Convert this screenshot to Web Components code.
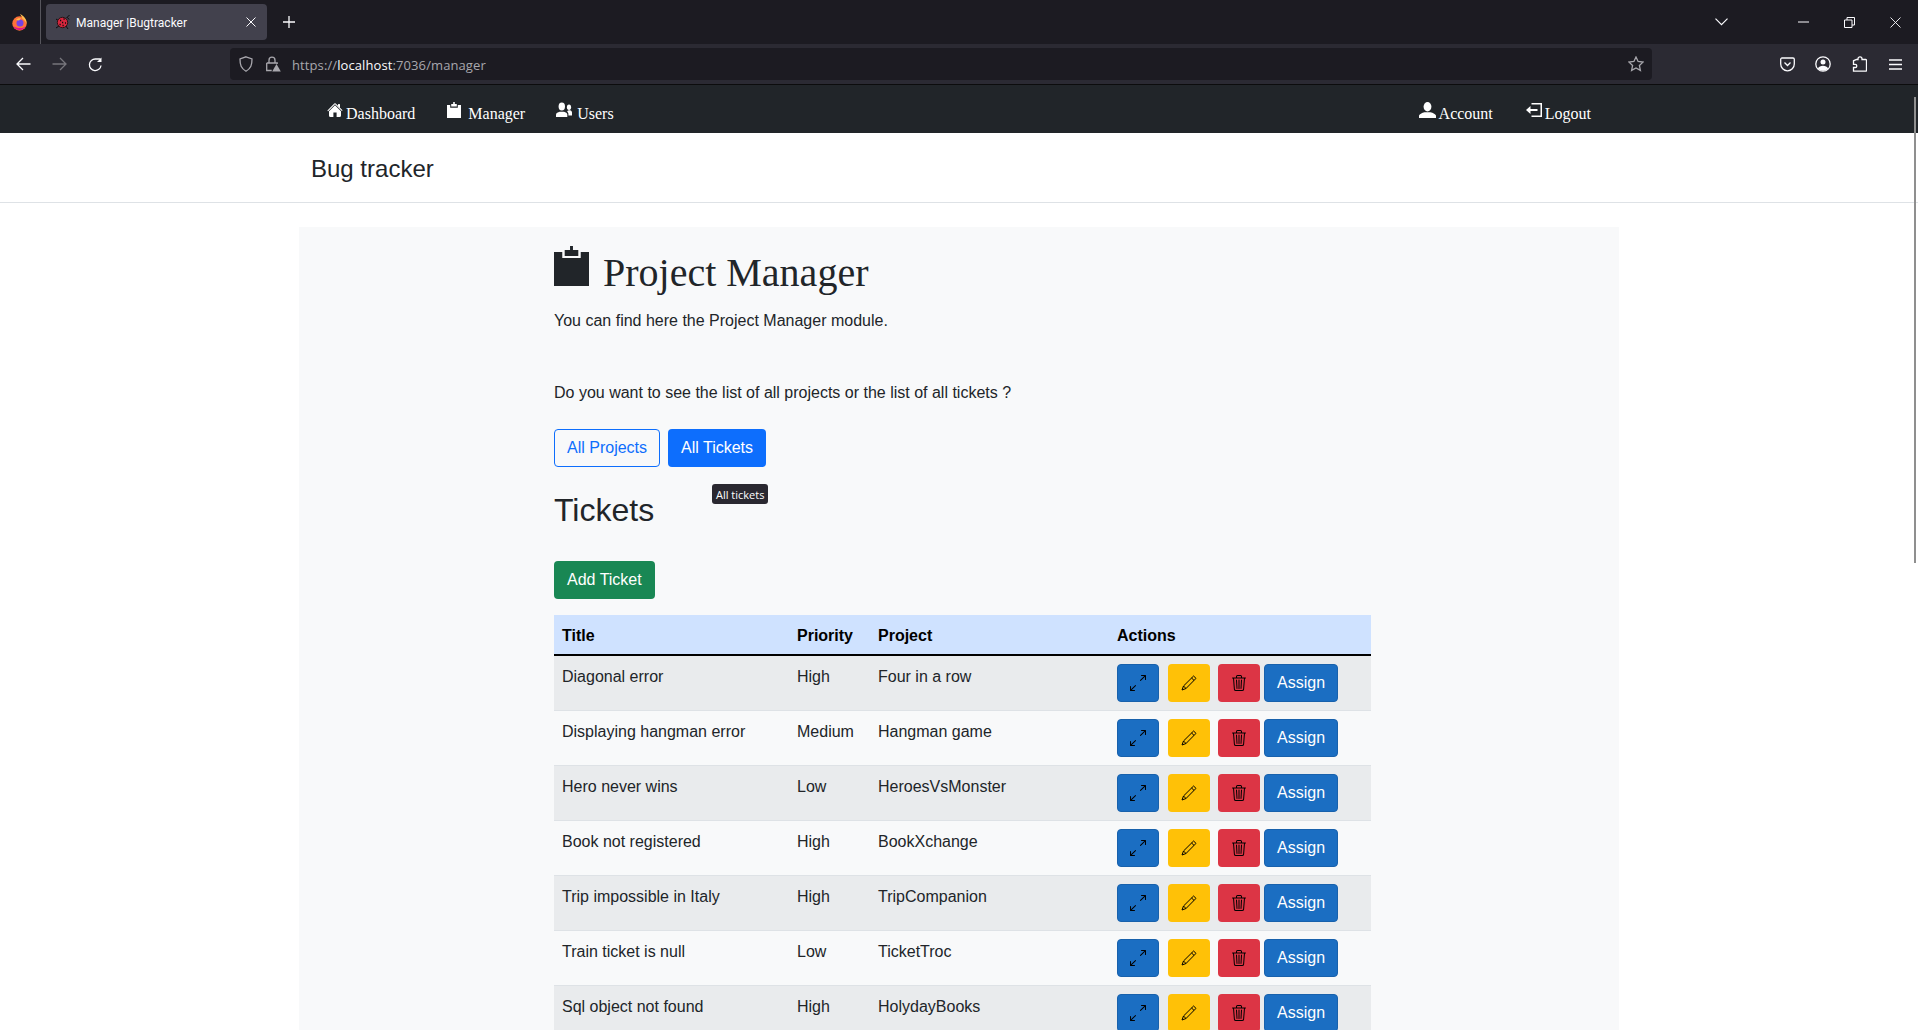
<!DOCTYPE html>
<html lang="en">
<head>
<meta charset="utf-8">
<title>Manager |Bugtracker</title>
<style>
  html, body { margin: 0; height: 1030px; overflow: hidden; background: #fff; }
  body { font-family: "Liberation Sans", Arial, sans-serif; color: #212529; }
</style>
</head>
<body>
<browser-chrome></browser-chrome>
<app-nav>
  <nav-link icon="house" slot="left">Dashboard</nav-link>
  <nav-link icon="clipboard" slot="left" gap="6">Manager</nav-link>
  <nav-link icon="people" slot="left" gap="5">Users</nav-link>
  <nav-link icon="person" slot="right" w="17">Account</nav-link>
  <nav-link icon="logout" slot="right">Logout</nav-link>
</app-nav>
<app-header>Bug tracker</app-header>
<page-card>
  <manager-intro></manager-intro>
  <ticket-table>
    <ticket-row name="Diagonal error" priority="High" project="Four in a row"></ticket-row>
    <ticket-row name="Displaying hangman error" priority="Medium" project="Hangman game"></ticket-row>
    <ticket-row name="Hero never wins" priority="Low" project="HeroesVsMonster"></ticket-row>
    <ticket-row name="Book not registered" priority="High" project="BookXchange"></ticket-row>
    <ticket-row name="Trip impossible in Italy" priority="High" project="TripCompanion"></ticket-row>
    <ticket-row name="Train ticket is null" priority="Low" project="TicketTroc"></ticket-row>
    <ticket-row name="Sql object not found" priority="High" project="HolydayBooks"></ticket-row>
  </ticket-table>
</page-card>
<page-scrollbar></page-scrollbar>

<script>
// icon drawings, all on a 16 unit grid
const ICONS = {
  house: '<path d="m8 3.3 6 6v4.2a1.5 1.5 0 0 1-1.5 1.5H9.6v-4.5H6.4V15H3.5A1.5 1.5 0 0 1 2 13.5V9.3l6-6zm5-.8V6l-2-2V2.5a.5.5 0 0 1 .5-.5h1a.5.5 0 0 1 .5.5z"/><path d="M7.3 1.5a1 1 0 0 1 1.4 0l6.6 6.6a.5.5 0 0 1-.7.7L8 2.2 1.4 8.9a.5.5 0 1 1-.7-.7L7.3 1.5z"/>',
  clipboard: '<path d="M1 3h3.2v2.8h7.6V3H15v13H1z"/><path d="M5.2 2h2V0h1.6v2h2v2.6H5.2z"/>',
  people: '<ellipse cx="5.8" cy="4.6" rx="3.2" ry="4"/><path d="M0 15v-2.4c0-1.6 2-2.4 3.6-2.9h4.4c1.600.5 3.300 1.300 3.300 2.900V15z"/><ellipse cx="13" cy="5.300" rx="2.100" ry="2.700"/><path d="M12.400 13.500v-1.300c0-1.200-.5-2-1.300-2.700.5-.8 1.200-1.200 1.900-1.200h1c1 .3 2 1 2 2.200v3z"/>',
  person: '<ellipse cx="8" cy="4.700" rx="3.700" ry="4.700"/><path d="M0 16v-2c0-1.900 3-3 5.200-3.700h5.600C13 11 16 12.100 16 14v2z"/>',
  logout: '<path d="M5.500 1H16v14H5.500v-1.500h9v-11h-9z"/><path d="M11.500 7h-7V4L0 8l4.500 4V9h7z"/>',
  expand: '<path d="M5.828 10.172a.5.5 0 0 0-.707 0l-4.096 4.096V11.500a.5.5 0 0 0-1 0v3.975a.5.5 0 0 0 .5.5H4.500a.5.5 0 0 0 0-1H1.732l4.096-4.096a.5.5 0 0 0 0-.707zm4.344-4.344a.5.5 0 0 0 .707 0l4.096-4.096V4.500a.5.5 0 1 0 1 0V.525a.5.5 0 0 0-.5-.5H11.500a.5.5 0 0 0 0 1h2.768l-4.096 4.096a.5.5 0 0 0 0 .707z"/>',
  pencil: '<path d="M12.600 1 15 3.400 5 13.500 1 15l1.500-4zM10.600 3l2.400 2.400M2.500 11 5 13.500" fill="none" stroke="currentColor" stroke-width="1"/>',
  trash: '<path d="M6.500 1h3a.5.5 0 0 1 .5.5v1H6v-1a.5.5 0 0 1 .5-.5ZM11 2.500v-1A1.500 1.500 0 0 0 9.500 0h-3A1.500 1.500 0 0 0 5 1.500v1H1.500a.5.5 0 0 0 0 1h.538l.853 10.660A2 2 0 0 0 4.885 16h6.230a2 2 0 0 0 1.994-1.840l.853-10.660h.538a.5.5 0 0 0 0-1H11Zm1.958 1-.846 10.580a1 1 0 0 1-.997.920h-6.230a1 1 0 0 1-.997-.920L3.042 3.500h9.916Zm-7.487 1a.5.5 0 0 1 .528.470l.5 8.500a.5.5 0 0 1-.998.060L5 5.030a.5.5 0 0 1 .47-.53Zm5.058 0a.5.5 0 0 1 .47.530l-.5 8.500a.5.5 0 1 1-.998-.060l.5-8.500a.5.5 0 0 1 .528-.47ZM8 4.500a.5.5 0 0 1 .5.5v8.500a.5.5 0 0 1-1 0V5a.5.5 0 0 1 .5-.5Z"/>'
}

/**
 * Small base class, renders the given html into an open shadow root.
 */
class ShadowElement extends HTMLElement {
  constructor () {
    super()
    this.attachShadow({ mode: 'open' })
  }

  render (html) {
    this.shadowRoot.innerHTML = html
  }
}

customElements.define('ui-icon', class extends ShadowElement {
  connectedCallback () {
    const w = this.getAttribute('w') || 16
    const h = this.getAttribute('h') || 16
    this.render(`
      <style>
        :host { display: inline-flex; flex: none; width: ${w}px; height: ${h}px; }
        svg { display: block; width: 100%; height: 100%; fill: currentColor; }
      </style>
      <svg viewBox="0 0 16 16" preserveAspectRatio="none">${ICONS[this.getAttribute('name')]}</svg>`)
  }
})

customElements.define('browser-chrome', class extends ShadowElement {
  connectedCallback () {
    this.render(`
      <style>
        :host { display: block; font-family: "Open Sans", "Noto Sans", sans-serif; color: #fbfbfe; }
        svg { display: block; fill: none; stroke: currentColor; stroke-width: 1.3; }
        .tabs { height: 44px; background: #1c1b22; display: flex; align-items: center; position: relative; }
        .ff { width: 41px; height: 44px; display: flex; align-items: center; box-sizing: border-box; padding-left: 11px; border-right: 1px solid #56555c; }
        .tab { margin-left: 5px; width: 221px; height: 36px; border-radius: 4px; background: #42414d; display: flex; align-items: center; box-sizing: border-box; padding-left: 9px; font: 12px Roboto, "Open Sans", sans-serif; }
        .tab span { margin-left: 5px; padding-top: 1px; }
        .tab svg.x { margin-left: auto; margin-right: 11px; }
        .plus { margin-left: 16px; }
        .right { margin-left: auto; display: flex; align-items: center; }
        .win { width: 46px; display: flex; justify-content: center; }
        .chev { margin-right: 52px; }
        .bar { height: 40px; background: #2b2a33; border-bottom: 1px solid #0c0c0d; display: grid; grid-template-columns: 230px 1422px 1fr; align-items: center; }
        .nav { display: flex; padding-left: 7px; gap: 4px; }
        .btn { width: 32px; height: 32px; display: flex; align-items: center; justify-content: center; }
        .dim { color: #77767c; }
        .url { height: 32px; background: #1c1b22; border-radius: 4px; display: flex; align-items: center; padding-left: 9px; font-size: 13px; color: #a8a7ad; }
        .url .t { margin-left: 11px; padding-top: 1px; letter-spacing: .1px; }
        .url b { font-weight: 400; color: #fbfbfe; }
        .url .star { margin-left: auto; margin-right: 8px; }
        .url .lock { margin-left: 12px; }
        .tools { display: flex; padding-left: 119px; gap: 4px; }
      </style>
      <div class="tabs">
        <div class="ff">
          <svg width="17" height="17" viewBox="0 0 17 17" style="stroke:none">
            <circle cx="8.500" cy="9.500" r="7.200" fill="#ff7139"/>
            <path d="M2 12a7.200 7.200 0 0 0 13 0c-2 2.500-9 3-13 0z" fill="#e31587"/>
            <path d="M9 0c4 2 7 5 6.500 10-.7-2.500-2-4-4-5C11 3 10 1.500 9 0z" fill="#ffbd4f"/>
            <circle cx="9" cy="9" r="3.500" fill="#7542e5"/>
            <path d="M5 6c1-1.500 3-2 5-1.500L8 6.500z" fill="#ffbd4f"/>
          </svg>
        </div>
        <div class="tab">
          <svg width="16" height="16" viewBox="0 0 16 16" style="stroke:#0c0c0d;stroke-width:1">
            <path d="M1 5l3 2M14.500 1l-3 3M1 14l3-2M13 15l-2-3M12.500 3.500l1.500 2"/>
            <circle cx="7.500" cy="8.500" r="5.200" fill="#d7263d" stroke="#2b1216"/>
            <path d="M5 6.500h1.200M8.500 5h1.200M7 8.500h1.200M10 9h1M4.500 10.500h1.200M7.500 11.500h1.200" stroke-width="1.400"/>
          </svg>
          <span>Manager |Bugtracker</span>
          <svg class="x" width="10" height="10" viewBox="0 0 10 10" style="stroke-width:1"><path d="M.5.5l9 9M9.500.5l-9 9"/></svg>
        </div>
        <svg class="plus" width="12" height="12" viewBox="0 0 12 12"><path d="M6 0v12M0 6h12"/></svg>
        <div class="right">
          <svg class="chev" width="13" height="8" viewBox="0 0 13 8" style="stroke-width:1.200"><path d="M.5.700l6 6 6-6"/></svg>
          <div class="win"><svg width="11" height="2" viewBox="0 0 11 2" style="stroke-width:1"><path d="M0 1h11"/></svg></div>
          <div class="win"><svg width="11" height="11" viewBox="0 0 11 11" style="stroke-width:1"><path d="M.5 3h7.500v7.500H.5zM3 3V.5h7.500V8H8"/></svg></div>
          <div class="win"><svg width="11" height="11" viewBox="0 0 11 11" style="stroke-width:.9"><path d="M.5.500l10 10M10.500.500l-10 10"/></svg></div>
        </div>
      </div>
      <div class="bar">
        <div class="nav">
          <div class="btn"><svg width="15" height="14" viewBox="0 0 15 14"><path d="M14.500 7H1M7 1L1 7l6 6"/></svg></div>
          <div class="btn dim"><svg width="15" height="14" viewBox="0 0 15 14"><path d="M.5 7H14M8 1l6 6-6 6"/></svg></div>
          <div class="btn"><svg width="15" height="15" viewBox="0 0 15 15"><path d="M13 8.500A5.800 5.800 0 1 1 7.500 2h5"/><path d="M13.500 .5v4.500H9" style="fill:currentColor;stroke:none"/></svg></div>
        </div>
        <div class="url">
          <svg width="14" height="16" viewBox="0 0 14 16"><path d="M7 .8l6 2.200c0 6-1 9.500-6 12.200C2 12.500 1 9 1 3z"/></svg>
          <svg class="lock" width="16" height="16" viewBox="0 0 16 16">
            <path d="M4 7V4.200a3 3 0 0 1 6 0V7M1.700 7h10.500v1M1.700 7v7.500h5"/>
            <path d="M11.500 8l4.300 7.500H7.200z" style="fill:currentColor;stroke:none"/>
          </svg>
          <span class="t">https://<b>localhost</b>:7036/manager</span>
          <svg class="star" width="16" height="16" viewBox="0 0 16 16"><path d="M8 1l2.100 4.500 4.900.6-3.600 3.400 1 4.900L8 12l-4.400 2.400 1-4.900L1 6.100l4.900-.6z"/></svg>
        </div>
        <div class="tools">
          <div class="btn"><svg width="15" height="15" viewBox="0 0 15 15"><path d="M2 1h11a1.300 1.300 0 0 1 1.300 1.300V7a6.800 6.800 0 0 1-13.600 0V2.300A1.300 1.300 0 0 1 2 1z"/><path d="M4.500 5.500l3 3 3-3"/></svg></div>
          <div class="btn"><svg width="16" height="16" viewBox="0 0 16 16"><circle cx="8" cy="8" r="7.200"/><circle cx="8" cy="6" r="2.500" style="fill:currentColor;stroke:none"/><path d="M2.800 12.500c1-2 3-2.800 5.200-2.800s4.200.8 5.200 2.800a7 7 0 0 1-10.400 0z" style="fill:currentColor;stroke:none"/></svg></div>
          <div class="btn"><svg width="15" height="16" viewBox="0 0 15 16"><path d="M6 3.500V2.800a2 2 0 0 1 4 0v.7h3.800a.7.7 0 0 1 .7.700V14.500a.7.7 0 0 1-.7.700H1.500v-3.700h1.700a1.500 1.500 0 0 0 0-3.200H1.500V4.800l3-1.300z"/></svg></div>
          <div class="btn"><svg width="13" height="11" viewBox="0 0 13 11" style="stroke-width:1.300"><path d="M0 1h13M0 5.500h13M0 10h13"/></svg></div>
        </div>
      </div>`)
  }
})

customElements.define('nav-link', class extends ShadowElement {
  connectedCallback () {
    const gap = this.getAttribute('gap') || 3
    this.render(`
      <style>
        :host { display: flex; align-items: flex-start; color: #fff; font: 16px/24px "Liberation Serif", "Times New Roman", serif; }
        ui-icon { margin-right: ${gap}px; }
      </style>
      <ui-icon name="${this.getAttribute('icon')}" w="${this.getAttribute('w') || 16}"></ui-icon><span><slot></slot></span>`)
  }
})

customElements.define('app-nav', class extends ShadowElement {
  connectedCallback () {
    this.render(`
      <style>
        :host { display: flex; height: 48px; box-sizing: border-box; background: #212529; padding: 17px 327px 0 327px; justify-content: space-between; }
        div { display: flex; gap: 31px; }
        .r { gap: 33px; }
      </style>
      <div><slot name="left"></slot></div>
      <div class="r"><slot name="right"></slot></div>`)
  }
})

customElements.define('app-header', class extends ShadowElement {
  connectedCallback () {
    this.render(`
      <style>
        :host { display: block; height: 70px; box-sizing: border-box; background: #fff; border-bottom: 1px solid #dee2e6; padding: 18px 0 0 311px; font-size: 24px; line-height: 36px; }
      </style>
      <slot></slot>`)
  }
})

customElements.define('page-card', class extends ShadowElement {
  connectedCallback () {
    this.render(`
      <style>
        :host { display: block; margin: 24px 0 0 299px; width: 1320px; box-sizing: border-box; background: #f8f9fa; padding: 19px 248px 0 255px; height: 900px; }
      </style>
      <slot></slot>`)
  }
})

customElements.define('ui-button', class extends ShadowElement {
  connectedCallback () {
    const kinds = {
      outline: 'background: transparent; color: #0d6efd; border-color: #0d6efd;',
      primary: 'background: #0d6efd; color: #fff; border-color: transparent;',
      success: 'background: #198754; color: #fff; border-color: transparent;',
      site: 'background: #1b6ec2; color: #fff; border-color: #1861ac;',
      info: 'background: #1b6ec2; color: #000; border-color: #1861ac;',
      warning: 'background: #ffc107; color: #000; border-color: transparent;',
      danger: 'background: #dc3545; color: #000; border-color: transparent;'
    }
    this.render(`
      <style>
        :host { display: inline-flex; }
        button { ${kinds[this.getAttribute('kind')]} height: 38px; padding: 0 12px; font: 16px/24px "Liberation Sans", Arial, sans-serif; border-width: 1px; border-style: solid; border-radius: 4px; display: flex; align-items: center; margin: 0; }
      </style>
      <button><slot></slot></button>`)
  }
})

customElements.define('manager-intro', class extends ShadowElement {
  connectedCallback () {
    this.render(`
      <style>
        :host { display: block; font-size: 16px; line-height: 24px; }
        .title { display: flex; align-items: flex-start; gap: 14px; height: 48px; }
        svg { display: block; width: 35px; height: 40px; fill: #212529; }
        h1 { margin: 0; font: 400 40px/48px "Liberation Serif", "Times New Roman", serif; padding-top: 3px; }
        p { margin: 0; }
        .sub { margin-top: 15px; }
        .ask { margin-top: 48px; }
        .choice { display: flex; gap: 8px; margin-top: 24px; }
        .head { position: relative; margin-top: 24px; height: 70px; }
        h2 { margin: 0; font: 400 32px/38px "Liberation Sans", Arial, sans-serif; }
        .tip { position: absolute; left: 158px; top: -7px; height: 20px; padding: 0 4px; display: flex; align-items: center; background: #2a2830; color: #fff; border-radius: 3px; font: 11px "Open Sans", "Noto Sans", sans-serif; }
      </style>
      <div class="title">
        <svg viewBox="0 0 36 40" preserveAspectRatio="none"><path d="M0 6h8.500v6h19V6H36v34H0z"/><path d="M11 4h5.500V0h3v4H25v6H11z"/></svg>
        <h1>Project Manager</h1>
      </div>
      <p class="sub">You can find here the Project Manager module.</p>
      <p class="ask">Do you want to see the list of all projects or the list of all tickets ?</p>
      <div class="choice">
        <ui-button kind="outline">All Projects</ui-button>
        <ui-button kind="primary">All Tickets</ui-button>
      </div>
      <div class="head">
        <h2>Tickets</h2>
        <div class="tip">All tickets</div>
      </div>
      <ui-button kind="success">Add Ticket</ui-button>`)
  }
})

customElements.define('ticket-table', class extends ShadowElement {
  connectedCallback () {
    this.render(`
      <style>
        :host { display: block; width: 817px; margin-top: 16px; font-size: 16px; line-height: 24px; color: #212529; }
        .row { display: grid; grid-template-columns: 235px 81px 239px 1fr; height: 41px; box-sizing: border-box; background: #cfe2ff; border-bottom: 2px solid #000; color: #000; font-weight: 700; }
        .row div { padding: 9px 8px 0; }
        ::slotted(ticket-row:nth-child(odd)) { background: #e9ebed; }
      </style>
      <div class="row"><div>Title</div><div>Priority</div><div>Project</div><div>Actions</div></div>
      <slot></slot>`)
  }
})

customElements.define('ticket-row', class extends ShadowElement {
  connectedCallback () {
    this.render(`
      <style>
        :host { display: grid; grid-template-columns: 235px 81px 239px 1fr; height: 55px; box-sizing: border-box; border-bottom: 1px solid #dee2e6; }
        .cell { padding: 9px 8px 7px; }
        .actions { display: flex; padding-top: 8px; }
        ui-button:nth-child(2) { margin-left: 9px; }
        ui-button:nth-child(3) { margin-left: 8px; }
        ui-button:nth-child(4) { margin-left: 4px; }
      </style>
      <div class="cell">${this.getAttribute('name')}</div>
      <div class="cell">${this.getAttribute('priority')}</div>
      <div class="cell">${this.getAttribute('project')}</div>
      <div class="cell actions">
        <ui-button kind="info"><ui-icon name="expand"></ui-icon></ui-button>
        <ui-button kind="warning"><ui-icon name="pencil"></ui-icon></ui-button>
        <ui-button kind="danger"><ui-icon name="trash"></ui-icon></ui-button>
        <ui-button kind="site">Assign</ui-button>
      </div>`)
  }
})

customElements.define('page-scrollbar', class extends ShadowElement {
  connectedCallback () {
    this.render(`
      <style>
        :host { position: absolute; top: 97px; left: 1914px; width: 2px; height: 466px; background: #8f8f8f; }
      </style>`)
  }
})
</script>
</body>
</html>
